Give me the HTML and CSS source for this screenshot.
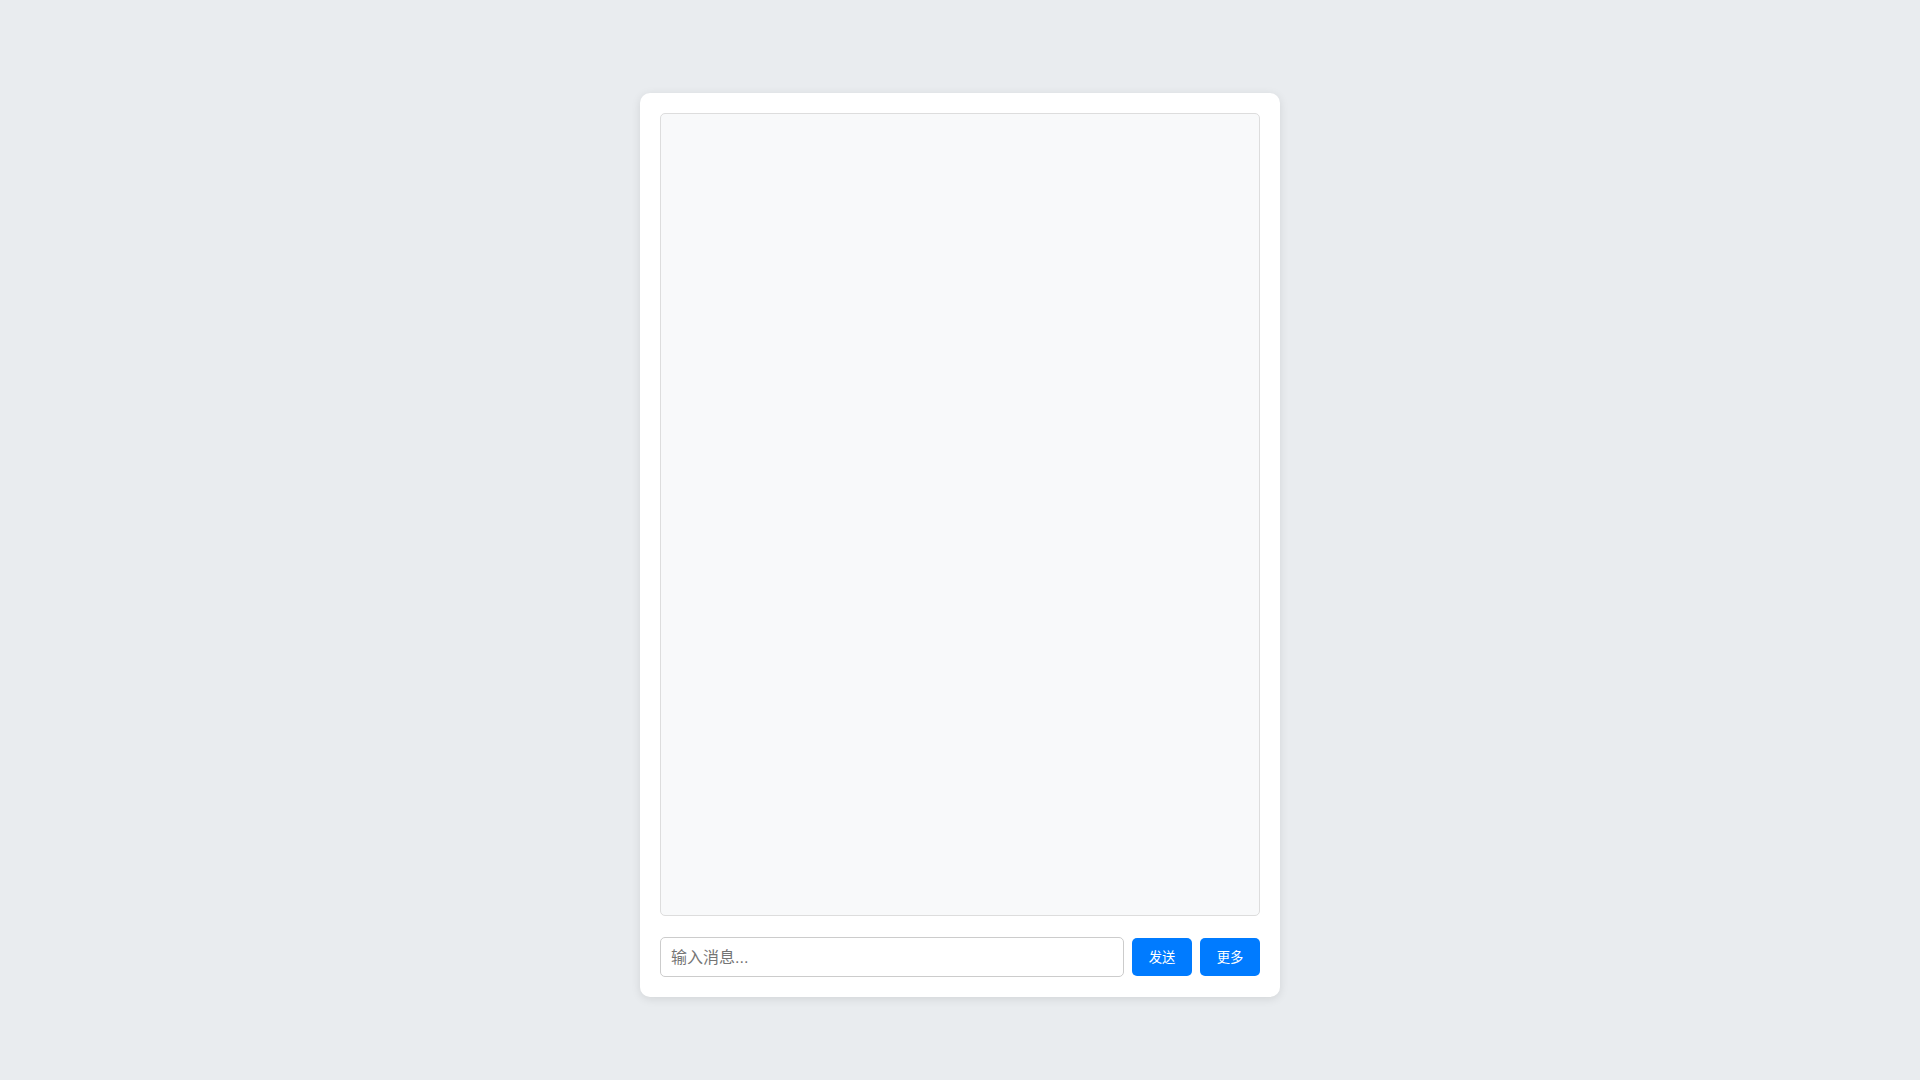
FILE: index.html
```html
<!DOCTYPE html>
<html lang="zh-CN">
<head>
<meta charset="utf-8">
<title>聊天</title>
<link rel="stylesheet" href="styles.css">
</head>
<body>
  <div class="chat-container">
    <div class="chat-box"></div>
    <div class="input-row">
      <input class="message-input" type="text" placeholder="输入消息...">
      <button class="btn">发送</button>
      <button class="btn">更多</button>
    </div>
  </div>
</body>
</html>
```

FILE: styles.css
```css
html, body {
  margin: 0;
  padding: 0;
}

body {
  background: #e9ecef;
  font-family: "Liberation Sans", Arial, "Noto Sans CJK SC", sans-serif;
  display: flex;
  flex-direction: column;
  align-items: center;
  padding-top: 93px;
  min-height: 100vh;
  box-sizing: border-box;
}

.chat-container {
  width: 640px;
  box-sizing: border-box;
  background: #ffffff;
  border-radius: 10px;
  box-shadow: 0 2px 10px rgba(0, 0, 0, 0.1);
  padding: 20px;
  display: flex;
  flex-direction: column;
  gap: 21px;
}

.chat-box {
  height: 803px;
  box-sizing: border-box;
  background: #f8f9fa;
  border: 1px solid #dddddd;
  border-radius: 5px;
}

.input-row {
  display: flex;
  align-items: center;
  gap: 8px;
  height: 40px;
}

.message-input {
  flex: 1;
  height: 40px;
  box-sizing: border-box;
  padding: 1px 10px 0 10px;
  border: 1px solid #cccccc;
  border-radius: 5px;
  font-family: "Liberation Sans", Arial, "Noto Sans CJK SC", sans-serif;
  font-size: 16px;
  color: #333333;
  background: #ffffff;
  outline: none;
}

.message-input::placeholder {
  color: #757575;
}

.btn {
  width: 60px;
  height: 38px;
  box-sizing: border-box;
  padding: 0 0 2px 0;
  border: none;
  border-radius: 5px;
  background: #007bff;
  color: #ffffff;
  font-family: "Liberation Sans", Arial, "Noto Sans CJK SC", sans-serif;
  font-size: 13.333px;
  cursor: pointer;
}
```
